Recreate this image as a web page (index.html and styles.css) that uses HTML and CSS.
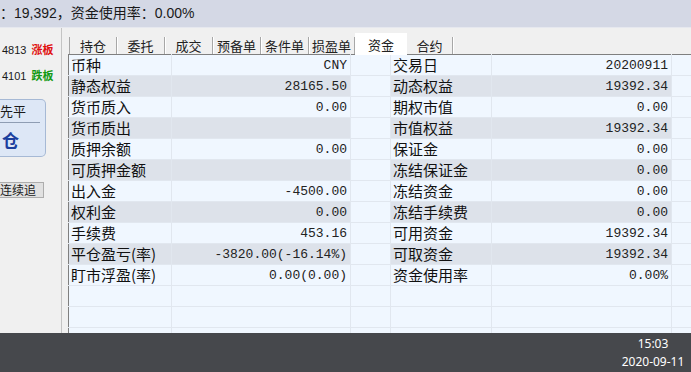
FILE: index.html
```html
<!DOCTYPE html>
<html lang="zh-CN">

<head>
    <meta charset="UTF-8">
    <meta name="viewport" content="width=device-width, initial-scale=1.0">
    <title>资金</title>
    <link rel="stylesheet" href="styles.css">
</head>

<body>
    <div class="topbar">
        <span class="status">：19,392，资金使用率：0.00%</span>
    </div>

    <div class="main">
        <div class="side">
            <div class="quote"><span class="num">4813</span><span class="up">涨板</span></div>
            <div class="quote"><span class="num">4101</span><span class="down">跌板</span></div>

            <div class="close-box">
                <div class="close-top">先平</div>
                <div class="close-btn">仓</div>
            </div>

            <div class="chase">连续追</div>
        </div>

        <div class="panel">
            <div class="tabs">
                <span class="tab first">持仓</span>
                <span class="tab">委托</span>
                <span class="tab">成交</span>
                <span class="tab">预备单</span>
                <span class="tab">条件单</span>
                <span class="tab narrow">损盈单</span>
                <span class="tab active">资金</span>
                <span class="tab narrow">合约</span>
            </div>

            <table class="funds">
                <colgroup>
                    <col style="width:103px">
                    <col style="width:179px">
                    <col style="width:40px">
                    <col style="width:101px">
                    <col style="width:180px">
                    <col style="width:60px">
                </colgroup>
                <tr>
                    <td class="label">币种</td><td class="value">CNY</td><td class="gap"></td>
                    <td class="label">交易日</td><td class="value">20200911</td><td class="gap"></td>
                </tr>
                <tr class="alt">
                    <td class="label">静态权益</td><td class="value">28165.50</td><td class="gap"></td>
                    <td class="label">动态权益</td><td class="value">19392.34</td><td class="gap"></td>
                </tr>
                <tr>
                    <td class="label">货币质入</td><td class="value">0.00</td><td class="gap"></td>
                    <td class="label">期权市值</td><td class="value">0.00</td><td class="gap"></td>
                </tr>
                <tr class="alt">
                    <td class="label">货币质出</td><td class="value"></td><td class="gap"></td>
                    <td class="label">市值权益</td><td class="value">19392.34</td><td class="gap"></td>
                </tr>
                <tr>
                    <td class="label">质押余额</td><td class="value">0.00</td><td class="gap"></td>
                    <td class="label">保证金</td><td class="value">0.00</td><td class="gap"></td>
                </tr>
                <tr class="alt">
                    <td class="label">可质押金额</td><td class="value"></td><td class="gap"></td>
                    <td class="label">冻结保证金</td><td class="value">0.00</td><td class="gap"></td>
                </tr>
                <tr>
                    <td class="label">出入金</td><td class="value">-4500.00</td><td class="gap"></td>
                    <td class="label">冻结资金</td><td class="value">0.00</td><td class="gap"></td>
                </tr>
                <tr class="alt">
                    <td class="label">权利金</td><td class="value">0.00</td><td class="gap"></td>
                    <td class="label">冻结手续费</td><td class="value">0.00</td><td class="gap"></td>
                </tr>
                <tr>
                    <td class="label">手续费</td><td class="value">453.16</td><td class="gap"></td>
                    <td class="label">可用资金</td><td class="value">19392.34</td><td class="gap"></td>
                </tr>
                <tr class="alt">
                    <td class="label">平仓盈亏(率)</td><td class="value">-3820.00(-16.14%)</td><td class="gap"></td>
                    <td class="label">可取资金</td><td class="value">19392.34</td><td class="gap"></td>
                </tr>
                <tr>
                    <td class="label">盯市浮盈(率)</td><td class="value">0.00(0.00)</td><td class="gap"></td>
                    <td class="label">资金使用率</td><td class="value">0.00%</td><td class="gap"></td>
                </tr>
                <tr class="empty"><td></td><td></td><td class="gap"></td><td></td><td></td><td class="gap"></td></tr>
                <tr class="empty"><td></td><td></td><td class="gap"></td><td></td><td></td><td class="gap"></td></tr>
                <tr class="empty"><td></td><td></td><td class="gap"></td><td></td><td></td><td class="gap"></td></tr>
            </table>
        </div>
    </div>

    <div class="taskbar">
        <div class="clock">
            <div>15:03</div>
            <div>2020-09-11</div>
        </div>
    </div>
</body>

</html>
```

FILE: styles.css
```css
body {
    margin: 0;
    width: 691px;
    height: 372px;
    overflow: hidden;
    background-color: #f0f0f0;
    font-family: "Liberation Sans", "Noto Sans CJK SC", sans-serif;
    color: #1a1a1a;
}

.topbar {
    height: 27px;
    background-color: #d4d8e5;
    border-bottom: 1px solid #e6e8ef;
    font-size: 14px;
    line-height: 26px;
    white-space: nowrap;
}

.main {
    display: flex;
    height: 305px;
    overflow: hidden;
}

/* left quote panel */
.side {
    width: 62px;
    flex: none;
    border-right: 1px solid #c4c4c4;
    padding-top: 8px;
    box-sizing: border-box;
    overflow: hidden;
}

.quote {
    height: 26px;
    line-height: 26px;
    font-size: 11px;
    white-space: nowrap;
    padding-left: 2px;
}

.quote .num {
    margin-right: 5px;
}

.up,
.down {
    font-family: "Noto Sans CJK SC", sans-serif;
    font-weight: bold;
    font-size: 11px;
}

.up {
    color: #e01010;
}

.down {
    color: #129a12;
}

.close-box {
    width: 46px;
    height: 58px;
    margin-top: 11px;
    box-sizing: border-box;
    background-color: #dde7f6;
    border: 1px solid #a6b9d5;
    border-left: none;
    border-radius: 0 5px 5px 0;
}

.close-top {
    height: 22px;
    line-height: 22px;
    font-family: "Noto Sans CJK SC", sans-serif;
    font-size: 13px;
    border-bottom: 1px solid #8e9db3;
    margin-right: 5px;
}

.close-btn {
    height: 33px;
    line-height: 33px;
    padding-left: 2px;
    font-family: "Noto Sans CJK SC", sans-serif;
    font-size: 17px;
    font-weight: bold;
    color: #1b3f9e;
}

.chase {
    width: 44px;
    height: 16px;
    margin-top: 25px;
    box-sizing: border-box;
    background-color: #e1e1e1;
    border: 1px solid #adadad;
    border-left: none;
    font-family: "Noto Sans CJK SC", sans-serif;
    font-size: 12px;
    line-height: 14px;
    white-space: nowrap;
    overflow: hidden;
}

/* right panel */
.panel {
    flex: 1;
    margin-left: 6px;
    padding-top: 5px;
    overflow: hidden;
}

.tabs {
    display: flex;
    height: 21px;
    padding-left: 1px;
    position: relative;
    z-index: 1;
}

.tab {
    width: 48px;
    flex: none;
    height: 17px;
    margin-top: 4px;
    box-sizing: border-box;
    text-align: center;
    font-family: "Noto Sans CJK SC", sans-serif;
    font-size: 13px;
    line-height: 17px;
    color: #222;
    border-right: 1px solid #a7a7a7;
    box-shadow: 1px 0 0 #ffffff;
}

.tab.first {
    border-left: 1px solid #a7a7a7;
}

.tab.narrow {
    width: 46px;
}

.tab.active {
    width: 52px;
    height: 22px;
    margin-top: 0;
    line-height: 24px;
    background-color: #ffffff;
    border-right: none;
    box-shadow: none;
}

.funds {
    table-layout: fixed;
    width: 663px;
    border-collapse: collapse;
    border-top: 1px solid #7f7f7f;
    border-left: 1px solid #7f7f7f;
    background-color: #f0f7ff;
}

.funds td {
    height: 20px;
    padding: 0 3px;
    border-right: 1px solid #e1e7ef;
    border-bottom: 1px solid #e1e7ef;
    white-space: nowrap;
    overflow: hidden;
}

.funds tr.alt td {
    background-color: #dde2ea;
}

.funds tr.alt td.gap {
    background-color: #f0f7ff;
}

.label {
    font-family: "Noto Sans CJK SC", sans-serif;
    font-size: 15px;
    line-height: 20px;
    color: #111;
}

.value {
    font-family: "Liberation Mono", monospace;
    font-size: 13px;
    text-align: right;
    color: #222;
}

.funds td.label {
    padding-left: 2px;
}

/* windows taskbar */
.taskbar {
    height: 39px;
    background-color: #46484c;
    display: flex;
    justify-content: flex-end;
}

.clock {
    width: 76px;
    padding-top: 2px;
    text-align: center;
    color: #ffffff;
    font-family: "Noto Sans", sans-serif;
    font-size: 12px;
    line-height: 18px;
}
```
